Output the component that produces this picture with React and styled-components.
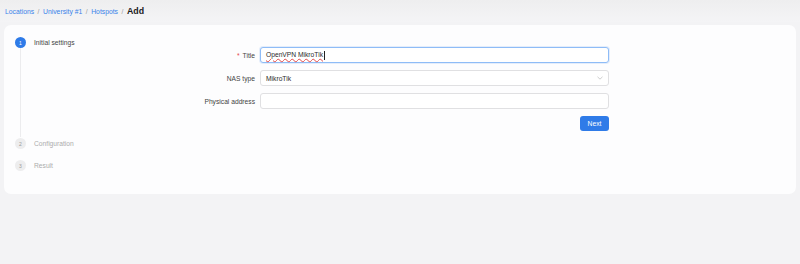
import React from 'react';
import styled, { createGlobalStyle } from 'styled-components';

const GlobalStyle = createGlobalStyle`
  html, body {
    margin: 0;
    padding: 0;
    height: 100%;
    background: #f3f3f5;
    font-family: "Liberation Sans", Arial, sans-serif;
  }
  #root {
    min-height: 100%;
  }
`;

const Page = styled.div`
  min-height: 264px;
  background: #f3f3f5;
`;

const Header = styled.div`
  height: 22px;
  display: flex;
  align-items: center;
  padding: 0 5px;
  background: linear-gradient(#eeeeef, #f4f4f6);
`;

const Crumb = styled.a`
  color: #3a82ea;
  font-size: 6.8px;
  text-decoration: none;
`;

const Sep = styled.span`
  color: #9a9a9a;
  font-size: 6.8px;
  margin: 0 3.5px;
`;

const Current = styled.span`
  color: #1b1b1b;
  font-size: 8.8px;
  font-weight: bold;
`;

const Card = styled.div`
  margin: 3px 4px 0;
  background: #fdfdfe;
  border-radius: 7px;
  padding: 12px 7px 12px;
`;

const Step = styled.div`
  display: flex;
  gap: 8px;
  min-height: ${(p) => (p.$grow ? 'auto' : '22px')};
`;

const Rail = styled.div`
  width: 11px;
  display: flex;
  flex-direction: column;
  align-items: center;
  margin-left: 4px;
`;

const Dot = styled.div`
  width: 11px;
  height: 11px;
  border-radius: 50%;
  flex: none;
  display: flex;
  align-items: center;
  justify-content: center;
  font-size: 5px;
  background: ${(p) => (p.$active ? '#2e7be8' : '#ededee')};
  color: ${(p) => (p.$active ? '#fff' : '#9a9a9a')};
`;

const Line = styled.div`
  flex: 1;
  width: 1px;
  background: #ececee;
  margin: 0 0 1px;
`;

const Body = styled.div`
  flex: 1;
  padding-bottom: ${(p) => (p.$grow ? '7px' : '0')};
`;

const StepTitle = styled.div`
  height: 11px;
  line-height: 11px;
  font-size: 6.7px;
  color: ${(p) => (p.$active ? '#444' : '#acacac')};
`;

const Form = styled.div`
  display: grid;
  grid-template-columns: 221px 349px;
  column-gap: 5px;
  row-gap: 7px;
  margin-top: -1px;
`;

const Label = styled.label`
  font-size: 6.7px;
  color: #444;
  display: flex;
  align-items: center;
  justify-content: flex-end;
  height: 16px;
`;

const Req = styled.span`
  color: #e5484d;
  margin-right: 3px;
`;

const Field = styled.div`
  box-sizing: border-box;
  height: 16px;
  border: 1px solid ${(p) => (p.$focus ? '#8ebcf7' : '#e0e0e2')};
  box-shadow: ${(p) => (p.$focus ? '0 0 0 1px rgba(46,123,232,0.12)' : 'none')};
  border-radius: 3px;
  background: #fff;
  display: flex;
  align-items: center;
  justify-content: space-between;
  padding: 0 5px;
  font-size: 6.7px;
  color: #2a2a2a;
`;

const Typed = styled.span`
  text-decoration: underline wavy #e24a4a;
  text-decoration-thickness: 0.6px;
  text-underline-offset: 1px;
`;

const Caret = styled.span`
  display: inline-block;
  width: 1px;
  height: 9px;
  background: #222;
  margin-left: 1px;
  vertical-align: middle;
`;

const Actions = styled.div`
  grid-column: 2;
  display: flex;
  justify-content: flex-end;
`;

const Button = styled.button`
  height: 15px;
  width: 29px;
  padding: 0;
  border: 0;
  border-radius: 3px;
  background: #2f7be8;
  color: #fff;
  font-family: inherit;
  font-size: 6.7px;
`;

const Chevron = () => (
  <svg width="6" height="4" viewBox="0 0 6 4" fill="none">
    <path d="M0.5 0.8 L3 3.2 L5.5 0.8" stroke="#b8b8b8" strokeWidth="0.7" />
  </svg>
);

export default function App() {
  return (
    <Page>
      <GlobalStyle />
      <Header>
        <Crumb>Locations</Crumb>
        <Sep>/</Sep>
        <Crumb>University #1</Crumb>
        <Sep>/</Sep>
        <Crumb>Hotspots</Crumb>
        <Sep>/</Sep>
        <Current>Add</Current>
      </Header>
      <Card>
        <Step $grow>
          <Rail>
            <Dot $active>1</Dot>
            <Line />
          </Rail>
          <Body $grow>
            <StepTitle $active>Initial settings</StepTitle>
            <Form>
              <Label>
                <Req>*</Req>Title
              </Label>
              <Field $focus>
                <span>
                  <Typed>OpenVPN MikroTik</Typed>
                  <Caret />
                </span>
              </Field>
              <Label>NAS type</Label>
              <Field>
                <span>MikroTik</span>
                <Chevron />
              </Field>
              <Label>Physical address</Label>
              <Field />
              <Actions>
                <Button>Next</Button>
              </Actions>
            </Form>
          </Body>
        </Step>
        <Step>
          <Rail>
            <Dot>2</Dot>
          </Rail>
          <Body>
            <StepTitle>Configuration</StepTitle>
          </Body>
        </Step>
        <Step>
          <Rail>
            <Dot>3</Dot>
          </Rail>
          <Body>
            <StepTitle>Result</StepTitle>
          </Body>
        </Step>
      </Card>
    </Page>
  );
}
